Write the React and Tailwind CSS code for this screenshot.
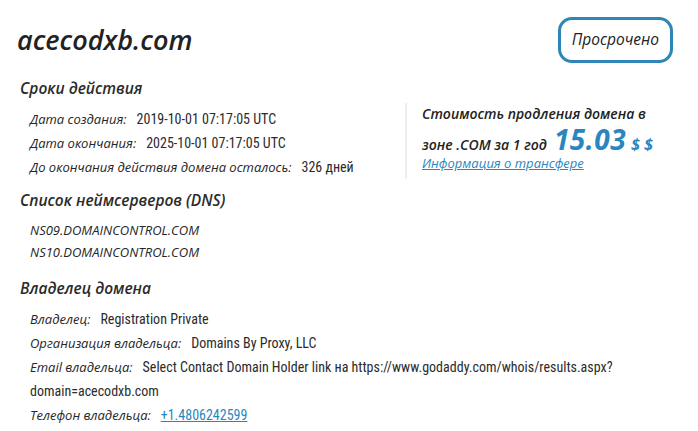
import React from 'react';

const head = "font-['Open_Sans',sans-serif] italic font-semibold text-[15.5px] leading-[24px] text-[#2b2b2b] pl-[3px]";
const label = "font-['Open_Sans',sans-serif] italic text-[13px] text-[#262626]";
const valueFont = "font-['Liberation_Sans_Narrow','Roboto_Condensed','DejaVu_Sans_Condensed',sans-serif] text-[14px]";

function Row({ name, children }) {
  return (
    <div className="leading-[23px]">
      <span className={label}>{name}:</span>
      <span className={`${valueFont} text-[#2b2b2b] ml-[10px]`}>{children}</span>
    </div>
  );
}

export default function App() {
  const timing = [
    ['Дата создания', '2019-10-01 07:17:05 UTC'],
    ['Дата окончания', '2025-10-01 07:17:05 UTC'],
    ['До окончания действия домена осталось', '326 дней'],
  ];

  return (
    <div className="w-[698px] h-[431px] bg-white px-[17px] overflow-hidden">
      <div className="flex justify-between items-center pt-[17px] pr-[8px]">
        <h1 className="font-['Open_Sans',sans-serif] italic font-semibold text-[27px] text-[#222] leading-[46px]">
          acecodxb.com
        </h1>
        <div className="h-[46px] px-[11px] flex items-center rounded-[14px] border-[3px] border-[#2f85b7] font-['Open_Sans',sans-serif] italic font-medium text-[15.5px] text-[#222]">
          Просрочено
        </div>
      </div>

      <h2 className={`${head} mt-[13px]`}>Сроки действия</h2>
      <div className="flex items-start mt-[7px] h-[69px]">
        <div className="w-[388px] pl-[13px]">
          {timing.map(([n, v]) => (
            <Row key={n} name={n}>{v}</Row>
          ))}
        </div>
        <div className="border-l-2 border-[#eeeeee] pl-[15px] mt-[-4px] h-[76px] flex-1">
          <p className="font-['Open_Sans',sans-serif] italic font-semibold text-[14px] text-[#222] leading-[22px]">
            Стоимость продления домена в
          </p>
          <p className="font-['Open_Sans',sans-serif] italic font-semibold text-[14px] text-[#222] h-[28px] leading-[28px] flex items-baseline">
            зоне .COM за 1 год
            <span className="text-[28px] leading-[28px] font-bold text-[#2a86bf] ml-[7px] tracking-[0.5px]">15.03</span>
            <span className="text-[16px] leading-[28px] font-bold text-[#2a86bf] ml-[5px]">$ $</span>
          </p>
          <a href="#" className="font-['Open_Sans',sans-serif] italic text-[13px] text-[#2a86bf] underline leading-[20px] block">
            Информация о трансфере
          </a>
        </div>
      </div>

      <h2 className={`${head} mt-[12px]`}>Список неймсерверов (DNS)</h2>
      <div className="mt-[7px] pl-[13px]">
        <div className={`${label} leading-[22px]`}>NS09.DOMAINCONTROL.COM</div>
        <div className={`${label} leading-[22px]`}>NS10.DOMAINCONTROL.COM</div>
      </div>

      <h2 className={`${head} mt-[13px]`}>Владелец домена</h2>
      <div className="mt-[7px] pl-[13px]">
        <Row name="Владелец">Registration Private</Row>
        <Row name="Организация владельца">Domains By Proxy, LLC</Row>
        <Row name="Email владельца">
          Select Contact Domain Holder link на https://www.godaddy.com/whois/results.aspx?domain=acecodxb.com
        </Row>
        <div className="leading-[23px]">
          <span className={label}>Телефон владельца:</span>
          <a href="#" className={`${valueFont} ml-[10px] text-[#2a86bf] underline`}>+1.4806242599</a>
        </div>
      </div>
    </div>
  );
}
